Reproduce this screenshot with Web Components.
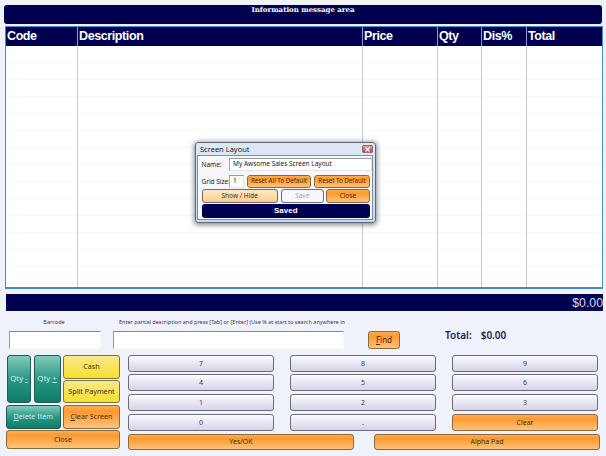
<!DOCTYPE html>
<html><head><meta charset="utf-8"><style>
html,body{margin:0;padding:0;background:#eff1fb;width:606px;height:456px;overflow:hidden;font-family:"Liberation Sans",Arial,sans-serif}
pos-screen{display:block}
</style></head><body>
<pos-screen>
<info-bar>Information message area</info-bar>
<sale-grid></sale-grid>
<total-bar>$0.00</total-bar>
<entry-row></entry-row>
<key-pad></key-pad>
</pos-screen>
<layout-dialog></layout-dialog>
<script>
const tpl=(css,html)=>{const t=document.createElement('template');t.innerHTML=`<style>${css}</style>${html}`;return t};
function def(name,css,html){const t=tpl(css,html);customElements.define(name,class extends HTMLElement{constructor(){super();this.attachShadow({mode:'open'}).appendChild(t.content.cloneNode(true))}})}

def('pos-screen',`:host{display:block;width:606px;height:456px;position:relative;box-sizing:border-box;padding-top:5px}`,`<slot></slot>`);
def('info-bar',`:host{display:block;box-sizing:border-box;margin:0 4px;height:19px;background:#00004f;border-radius:3px;color:#fff;font:bold 7px "DejaVu Serif","Liberation Serif",serif;text-align:center;padding-top:1px;line-height:8px}`,`<slot></slot>`);

def('sale-grid',`:host{display:block;box-sizing:border-box;margin:2px 3px 0 5px;height:263px;border:1px solid #3f8fd0;border-bottom-width:2px;background:#fff}
.t{display:grid;grid-template-columns:71px 285px 75px 44px 45px 1fr;height:100%;grid-template-rows:19px 1fr}
.h{background:#00004f;color:#fff;font:bold 12.5px/19px "Liberation Sans",Arial,sans-serif;padding-left:1px;border-left:1px solid #8c9cc8;letter-spacing:-.4px}
.h:first-child{border-left:0}
.c{border-left:1px solid #c8c8c8;background:repeating-linear-gradient(to bottom,transparent 0 16px,#f8f8f8 16px 17px)}
.c:nth-child(7){border-left:0}`,
`<div class="t"><div class="h">Code</div><div class="h">Description</div><div class="h">Price</div><div class="h">Qty</div><div class="h">Dis%</div><div class="h">Total</div>
<div class="c"></div><div class="c"></div><div class="c"></div><div class="c"></div><div class="c"></div><div class="c"></div></div>`);

def('total-bar',`:host{display:block;box-sizing:border-box;margin:5px 3px 0 6px;height:17px;background:#00004f;color:#d8dcf0;font:12.3px/18px "Liberation Sans",Arial,sans-serif;text-align:right}`,`<slot></slot>`);

def('entry-row',`:host{display:grid;grid-template-columns:92px 243px 56px auto;height:43.5px;margin-left:9px}
.l{font:5.5px/8px "Noto Sans",sans-serif;color:#3a3a50;height:20px;padding-top:7px;box-sizing:border-box;white-space:nowrap}
.bl{text-align:center;padding-right:2px}
.c{display:flex;flex-direction:column}
.i{height:18px;box-sizing:border-box;background:#fff;border:1px solid #f8f8f8;border-top:1px solid #888;border-left:1px solid #999}
.b{margin-left:12px;width:231px}.ld{padding-left:6px}
.in{width:92px}
.f{width:32px;margin-left:24px;padding-top:20px;box-sizing:border-box;height:38px;--fs:8px}
.t{margin-left:45px;padding-top:17px;font:600 10px/14px "Noto Sans",sans-serif;color:#23234f;white-space:nowrap}
.t span{margin-left:9px}`,
`<div class="c"><div class="l bl in">Barcode</div><div class="i in"></div></div>
<div class="c"><div class="l b ld">Enter partial description and press [Tab] or [Enter] (Use % at start to search anywhere in</div><div class="i b"></div></div>
<div class="f"><pos-btn kind="orange"><u>F</u>ind</pos-btn></div>
<div class="t">Total:<span>$0.00</span></div>`);

const kinds={
 orange:'background:linear-gradient(#fdae58,#fc9a30 25%,#ffc27a);border-color:#8a6a3c;color:#4a2a08',
 pale:'background:linear-gradient(#fee9c8,#fdcf90);border-color:#6d6a60;color:#3a2c18',
 teal:'background:linear-gradient(#82cbbb,#2a9785 50%,#0f7a68);border-color:#245a50;color:#cdeee6',
 yellow:'background:linear-gradient(#fbe78a,#f5e030);border-color:#7a7440;color:#3a3408',
 grey:'background:linear-gradient(#fafaff,#d6d3e6);border-color:#6c6c74;color:#3c3c44',
 white:'background:#f6f6fb;border-color:#6c6c74;color:#a8a8b0'
};
class PosBtn extends HTMLElement{constructor(){super();const k=this.getAttribute('kind')||'grey';
 this.attachShadow({mode:'open'}).innerHTML=`<style>:host{display:block;height:100%;min-width:0}
 .b{box-sizing:border-box;height:100%;border:1px solid;border-radius:3px;display:flex;align-items:center;justify-content:center;text-align:center;font:var(--fs,8px)/1 "Noto Sans",sans-serif;white-space:pre;${kinds[k]}}</style><div class="b"><slot></slot></div>`}}
customElements.define('pos-btn',PosBtn);

def('key-pad',`:host{display:grid;grid-template-columns:115px 472px;column-gap:7px;margin:0 0 0 6px;height:96px}
.left{display:grid;grid-template-columns:25px 27px 57px;column-gap:2.5px;grid-template-rows:24px 23px 24px 19px;row-gap:1.5px;--fs:7.2px}
.q1{margin-left:1px}.q1,.q2{grid-row:1/3;--fs:7.8px}
.cash{grid-column:3;grid-row:1}.split{grid-column:3;grid-row:2}
.del{grid-column:1/3;grid-row:3}.clr{grid-column:3;grid-row:3}.cl{grid-column:1/4;grid-row:4}
.right{display:flex;flex-direction:column}
.nums{display:grid;grid-template-columns:repeat(3,146px);column-gap:16px;grid-template-rows:repeat(4,17px);row-gap:2.7px;--fs:7px}
.bot{display:grid;grid-template-columns:226px 226px;column-gap:20px;height:16.5px;margin-top:3px;--fs:7px}`,
`<div class="left">
<pos-btn class="q1" kind="teal">Qty <u>-</u></pos-btn><pos-btn class="q2" kind="teal">Qty <u>+</u></pos-btn>
<pos-btn class="cash" kind="yellow">Cash</pos-btn><pos-btn class="split" kind="yellow">Split Payment</pos-btn>
<pos-btn class="del" kind="teal"><u>D</u>elete Item</pos-btn><pos-btn class="clr" kind="orange"><u>C</u>lear Screen</pos-btn>
<pos-btn class="cl" kind="orange">Close</pos-btn></div>
<div class="right"><div class="nums">
<pos-btn>7</pos-btn><pos-btn>8</pos-btn><pos-btn>9</pos-btn>
<pos-btn>4</pos-btn><pos-btn>5</pos-btn><pos-btn>6</pos-btn>
<pos-btn>1</pos-btn><pos-btn>2</pos-btn><pos-btn>3</pos-btn>
<pos-btn>0</pos-btn><pos-btn>.</pos-btn><pos-btn kind="orange">Clear</pos-btn></div>
<div class="bot"><pos-btn kind="orange">Yes/OK</pos-btn><pos-btn kind="orange">Alpha Pad</pos-btn></div></div>`);

def('layout-dialog',`:host{position:absolute;left:195px;top:142px;width:181px;height:81px;box-sizing:border-box;border:1px solid #5a6a76;border-radius:3px;background:linear-gradient(#dde9f5,#c8dae9);box-shadow:0 1px 5px 1px rgba(50,60,70,.6);display:flex;flex-direction:column;padding:0 2px 2px 1px;--fs:6.5px;font-family:"Noto Sans",sans-serif}
.title{height:12px;flex:none;display:flex;align-items:center;justify-content:space-between;font-size:7.5px;color:#222;padding:0 0 0 3px}
.x{width:11px;height:8px;border-radius:1px;background:linear-gradient(#e39a90,#b84a44);display:flex;align-items:center;justify-content:center;border:1px solid #9a7070;box-sizing:border-box}
.body{flex:1;background:#f5f7fc;border:1px solid #7d8f9c;padding:2px 0 0 3.5px;display:flex;flex-direction:column}
.r{display:flex;align-items:stretch;flex:none}
label{font-size:6.5px;color:#222;align-self:center;white-space:nowrap;width:27.5px;flex:none}
.i{background:#fff;border:1px solid #e4e4e4;border-top-color:#999;border-left-color:#aaa;box-sizing:border-box;font-size:6.5px;color:#222;padding:0 3px;line-height:10px}
.r1{height:13px;margin-bottom:4px}.r1 .i{flex:1}
.r2{height:13px;margin-bottom:1px;--fs:6.2px}.r2 .i{width:15px;flex:none}.r2 pos-btn:nth-of-type(1){width:64px;margin-left:3px}.r2 pos-btn:nth-of-type(2){width:56px;margin-left:3px}
.r3{height:14px;margin-bottom:1px}.r3 pos-btn:nth-of-type(1){width:76.5px}.r3 pos-btn:nth-of-type(2){width:43.5px;margin-left:2.5px}.r3 pos-btn:nth-of-type(3){width:44px;margin-left:2px}
.saved{height:14px;background:#00004f;border-radius:3px;color:#fff;font:bold 8px/14px "Liberation Sans",sans-serif;text-align:center;width:168.5px}`,
`<div class="title"><span>Screen Layout</span><span class="x"><svg width="5" height="5" viewBox="0 0 5 5"><path d="M.5.5l4 4M4.5.5l-4 4" stroke="#fff" stroke-width="1.2"/></svg></span></div>
<div class="body">
<div class="r r1"><label>Name:</label><div class="i">My Awsome Sales Screen Layout</div></div>
<div class="r r2"><label>Grid Size:</label><div class="i">1</div><pos-btn kind="orange">Reset All To Default</pos-btn><pos-btn kind="orange">Reset To Default</pos-btn></div>
<div class="r r3"><pos-btn kind="pale">Show / Hide</pos-btn><pos-btn kind="white">Save</pos-btn><pos-btn kind="orange">Close</pos-btn></div>
<div class="saved">Saved</div>
</div>`);
</script></body></html>
